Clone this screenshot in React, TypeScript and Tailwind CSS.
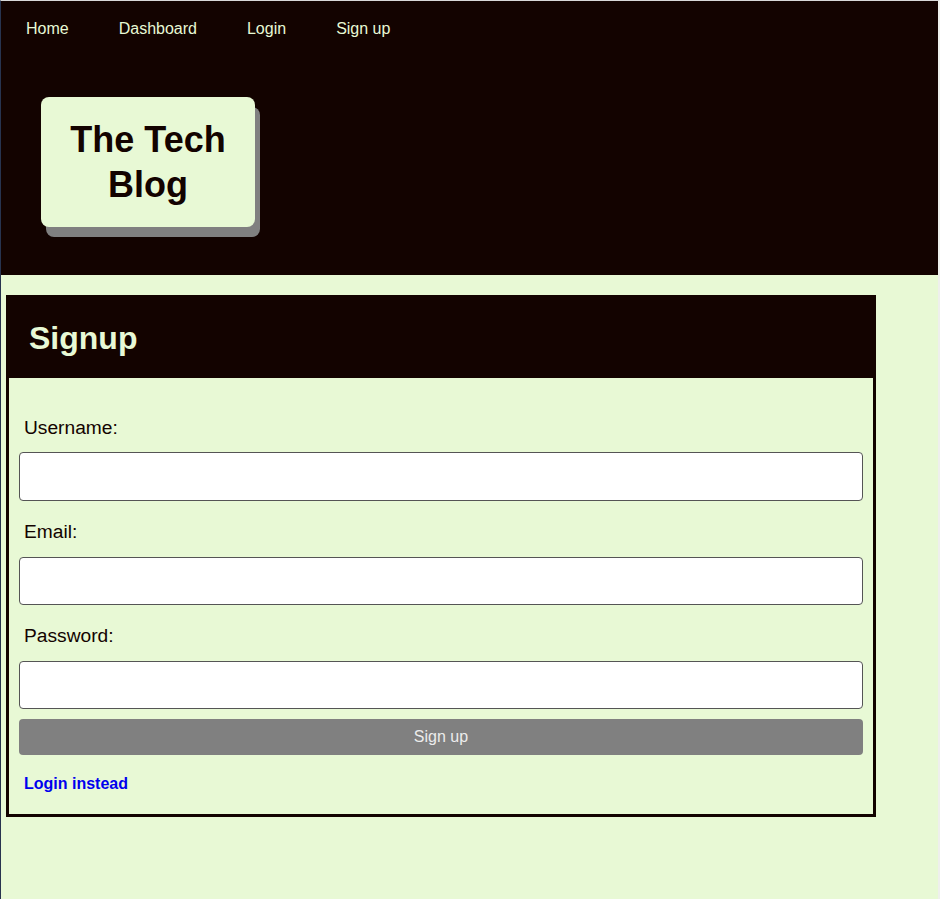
import React from "react";

export default function App() {
  const font = { fontFamily: '"Liberation Sans", Arial, sans-serif' };
  return (
    <div
      className="min-h-[899px] w-[940px] bg-[#e8f9d5] border-t border-t-[#d8d8d8] border-l border-l-[#28344f] border-r-2 border-r-[#eef0ec] flex flex-col"
      style={font}
    >
      <header className="bg-[#130300] pb-[48px]">
        <nav className="flex pt-[16px] text-[16px] leading-[24px] text-[#e8f9d5]">
          <a className="ml-[25px] mr-[25px]">Home</a>
          <a className="mx-[25px]">Dashboard</a>
          <a className="mx-[25px]">Login</a>
          <a className="mx-[25px]">Sign up</a>
        </nav>
        <div className="mt-[56px] ml-[40px] w-[214px] h-[130px] rounded-[8px] bg-[#e8f9d5] shadow-[5px_10px_0_#808080] flex items-center justify-center">
          <h1 className="text-[36px] leading-[45px] font-bold text-center text-[#130300]">
            The Tech
            <br />
            Blog
          </h1>
        </div>
      </header>
      <main className="flex-1 pt-[20px]">
        <div className="ml-[5px] w-[870px] border-[3px] border-[#130300]">
          <div className="bg-[#130300] h-[80px] flex items-center pl-[20px]">
            <h2 className="text-[32px] font-bold text-[#e8f9d5] leading-none">Signup</h2>
          </div>
          <form className="px-[10px] pt-[36px] pb-[18px] text-[#130300]">
            <label className="block pl-[5px] text-[19.2px] leading-[27px] mb-[11px]">Username:</label>
            <input className="block w-full h-[49px] bg-white border border-[#555] rounded-[4px]" />
            <label className="block pl-[5px] text-[19.2px] leading-[27px] mt-[17px] mb-[12px]">Email:</label>
            <input className="block w-full h-[48px] bg-white border border-[#555] rounded-[4px]" />
            <label className="block pl-[5px] text-[19.2px] leading-[27px] mt-[17px] mb-[12px]">Password:</label>
            <input
              type="password"
              className="block w-full h-[48px] bg-white border border-[#555] rounded-[4px]"
            />
            <button
              type="button"
              className="block w-full h-[36px] mt-[10px] bg-[#808080] rounded-[4px] text-[16px] text-[#ececec]"
            >
              Sign up
            </button>
            <a className="block pl-[5px] mt-[17px] text-[16px] leading-[24px] font-bold text-[#0000ee]">
              Login instead
            </a>
          </form>
        </div>
      </main>
    </div>
  );
}
